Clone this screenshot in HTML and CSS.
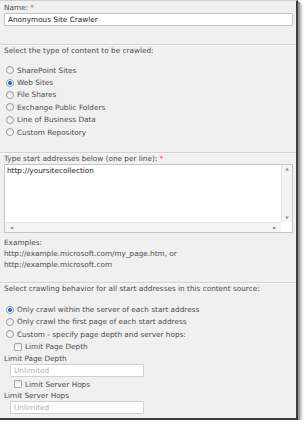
FILE: index.html
```html
<!DOCTYPE html>
<html lang="en">
<head>
    <meta charset="UTF-8">
    <title>Content Source</title>
    <link rel="stylesheet" href="styles.css">
</head>
<body>
    <div class="panel">
        <!-- Name -->
        <div class="section name-section">
            <div class="label">Name: <span class="req">*</span></div>
            <input class="text-input wide" type="text" value="Anonymous Site Crawler">
        </div>

        <!-- Content type -->
        <div class="section type-section">
            <div class="label">Select the type of content to be crawled:</div>
            <div class="options">
                <label class="option"><input type="radio" name="type"> SharePoint Sites</label>
                <label class="option"><input type="radio" name="type" checked> Web Sites</label>
                <label class="option"><input type="radio" name="type"> File Shares</label>
                <label class="option"><input type="radio" name="type"> Exchange Public Folders</label>
                <label class="option"><input type="radio" name="type"> Line of Business Data</label>
                <label class="option"><input type="radio" name="type"> Custom Repository</label>
            </div>
        </div>

        <!-- Start addresses -->
        <div class="section address-section">
            <div class="label">Type start addresses below (one per line): <span class="req">*</span></div>
            <div class="textarea">
                <div class="textarea-body">
                    <div class="textarea-text">http://yoursitecollection</div>
                    <div class="vscroll"><span class="arrow">&#9650;</span><span class="arrow">&#9660;</span></div>
                </div>
                <div class="hscroll"><span class="arrow">&#9664;</span><span class="arrow">&#9654;</span></div>
            </div>
            <div class="examples">
                Examples:<br>
                http://example.microsoft.com/my_page.htm, or<br>
                http://example.microsoft.com
            </div>
        </div>

        <!-- Crawl behaviour -->
        <div class="section crawl-section">
            <div class="label">Select crawling behavior for all start addresses in this content source:</div>
            <div class="options">
                <label class="option"><input type="radio" name="crawl" checked> Only crawl within the server of each start address</label>
                <label class="option"><input type="radio" name="crawl"> Only crawl the first page of each start address</label>
                <label class="option"><input type="radio" name="crawl"> Custom - specify page depth and server hops:</label>
            </div>
            <div class="custom">
                <label class="check"><input type="checkbox"> Limit Page Depth</label>
                <div class="sublabel">Limit Page Depth</div>
                <input class="text-input small" type="text" placeholder="Unlimited" disabled>
                <label class="check"><input type="checkbox"> Limit Server Hops</label>
                <div class="sublabel">Limit Server Hops</div>
                <input class="text-input small" type="text" placeholder="Unlimited" disabled>
            </div>
        </div>
    </div>
</body>
</html>
```

FILE: styles.css
```css
body {
    margin: 0;
    background: #ffffff;
    font-family: "DejaVu Sans", Verdana, sans-serif;
    font-size: 7.3px;
    color: #4c4c4c;
}
.panel {
    width: 298px;
    height: 420px;
    background: #f0f0f0;
    border-top: 1px solid #d0d0d0;
    border-right: 2px solid #3c3c3c;
    border-bottom: 2px solid #3c3c3c;
    box-shadow: 2px 2px 1px #9a9a9a, 4px 4px 2px #c8c8c8;
    box-sizing: border-box;
}
.section {
    padding: 0 4px;
    border-top: 1px solid #d2d2d2;
    box-shadow: inset 0 1px 0 #f8f8f8;
}
.section:first-child {
    border-top: none;
    box-shadow: none;
}
.label {
    line-height: 11px;
}
.req {
    color: #e03030;
}
.name-section {
    padding-top: 1px;
    padding-bottom: 18px;
}
.type-section {
    padding-bottom: 14px;
}
.address-section {
    padding-bottom: 12px;
}
.crawl-section {
    padding-bottom: 6px;
}
.text-input {
    display: block;
    box-sizing: border-box;
    height: 13px;
    margin: 0;
    padding: 0 3px;
    border: 1px solid #c6c6c6;
    border-radius: 1px;
    background: #ffffff;
    font-family: inherit;
    font-size: 7.3px;
    color: #222222;
}
.text-input.wide {
    width: 289px;
}
.text-input.small {
    width: 134px;
    margin-left: 6px;
    border-color: #d0d0d0;
}
.text-input.small::placeholder {
    color: #b0b0b0;
}
.options {
    margin-top: 8px;
    display: flex;
    flex-direction: column;
}
.crawl-section .options {
    margin-top: 9px;
}
.option, .check {
    display: flex;
    align-items: center;
    height: 12.4px;
    color: #4c4c4c;
}
.option input, .check input {
    appearance: none;
    margin: 0 3px 0 2px;
    box-sizing: border-box;
    background: linear-gradient(#e8e8e8, #ffffff);
}
.option input {
    width: 8px;
    height: 8px;
    border: 1px solid #9a9a9a;
    border-radius: 50%;
}
.option input:checked {
    background: radial-gradient(circle, #1d5fa8 0, #3a7cc4 1.6px, #ffffff 2.4px, #f0f0f0 4px);
}
.check {
    margin-left: 8px;
}
.check input {
    width: 8px;
    height: 8px;
    border: 1px solid #a8a8a8;
    border-radius: 1px;
}
.sublabel {
    line-height: 11px;
}
.custom .check:nth-of-type(2) {
    margin-top: 1px;
}
.textarea {
    width: 289px;
    height: 69px;
    box-sizing: border-box;
    border: 1px solid #c6c6c6;
    background: #ffffff;
    display: flex;
    flex-direction: column;
}
.textarea-body {
    flex: 1;
    display: flex;
}
.textarea-text {
    flex: 1;
    padding: 1px 2px;
    line-height: 10px;
    color: #222222;
}
.vscroll {
    width: 10px;
    background: #f4f4f4;
    border-left: 1px solid #e4e4e4;
    display: flex;
    flex-direction: column;
    justify-content: space-between;
    align-items: center;
}
.hscroll {
    height: 9px;
    margin-right: 11px;
    background: #f4f4f4;
    border-top: 1px solid #e4e4e4;
    display: flex;
    justify-content: space-between;
    align-items: center;
    padding: 0 5px;
}
.arrow {
    font-size: 4px;
    line-height: 8px;
    color: #8a8a8a;
}
.examples {
    margin-top: 4px;
    line-height: 11px;
}
```
